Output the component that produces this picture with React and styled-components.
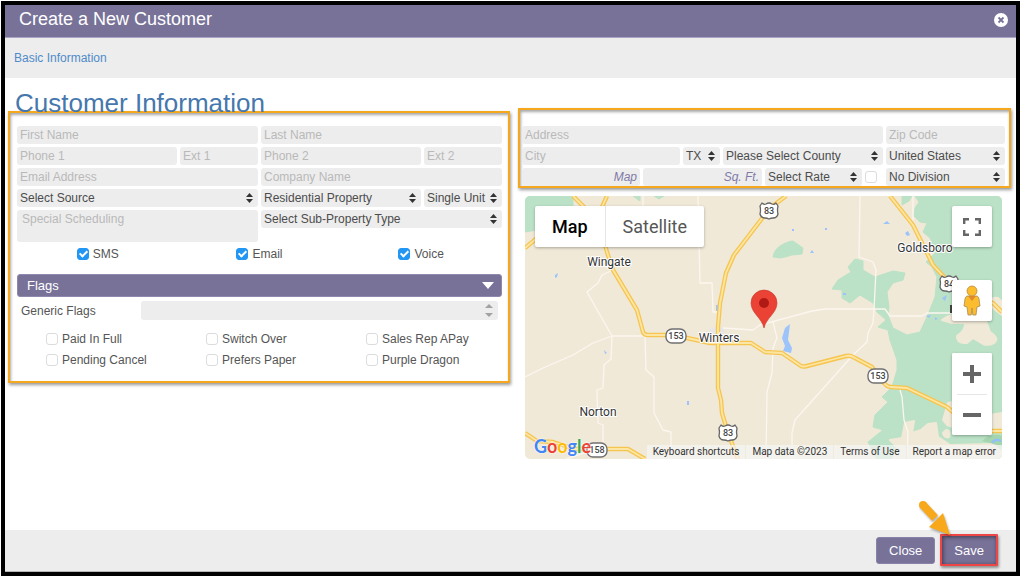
import { useState } from "react";
import styled, { createGlobalStyle } from "styled-components";

const GlobalStyle = createGlobalStyle`
  *, *::before, *::after {
    box-sizing: border-box;
  }

  body {
    margin: 0;
    background: #fff;
    color: #555;
    font-family: "Liberation Sans", Arial, sans-serif;
    font-size: 12px;
  }

  input, select, textarea, button {
    font: inherit;
    color: inherit;
    margin: 0;
  }
`;

const Page = styled.div`
  min-height: 100vh;
  padding: 1px 2px 1px 1px;
  display: flex;
`;

const Dialog = styled.div`
  flex: 1;
  display: flex;
  flex-direction: column;
  border: 4px solid #000;
  background: #fff;
`;

const TitleBar = styled.header`
  display: flex;
  align-items: center;
  justify-content: space-between;
  height: 33px;
  padding: 0 8px 3px 14px;
  background: #787299;
  border-bottom: 1px solid #aaa5c4;
  color: #fff;
`;

const Title = styled.h2`
  margin: 0;
  font-size: 18px;
  font-weight: 400;
`;

const CloseIcon = styled.button`
  display: flex;
  padding: 0;
  border: 0;
  background: none;
`;

const Tabs = styled.nav`
  display: flex;
  align-items: center;
  height: 40px;
  padding: 0 9px;
  background: #ededed;
`;

const TabLink = styled.a`
  color: #4f8bca;
  text-decoration: none;
`;

const Content = styled.main`
  flex: 1;
  display: grid;
  grid-template-columns: 502fr 493fr;
  gap: 8px;
  align-items: start;
  padding: 0 5px 0 3px;
`;

const Heading = styled.h1`
  margin: 0;
  padding: 10px 7px 0;
  height: 33px;
  line-height: 30px;
  font-size: 26px;
  font-weight: 400;
  color: #4677ad;
`;

const Panel = styled.section`
  border: 2px solid #f5a71d;
  box-shadow: 1px 2px 3px rgba(0, 0, 0, 0.4), inset 1px 2px 3px rgba(0, 0, 0, 0.35);
`;

const CustomerPanel = styled(Panel)`
  padding: 13px 6px 12px 7px;
`;

const AddressPanel = styled(Panel)`
  margin-top: 30px;
  padding: 16px 4px 0 2px;
`;

const Stack = styled.div`
  display: flex;
  flex-direction: column;
  gap: 3px;
`;

const Row = styled.div`
  display: grid;
  grid-template-columns: ${(props) => props.$columns};
  gap: 3px;
  align-items: start;
`;

const Field = styled.input`
  display: block;
  width: 100%;
  min-width: 0;
  height: 18px;
  padding: 0 3px;
  border: 0;
  border-radius: 3px;
  background: #ededed;

  &::placeholder {
    color: #b9b9b9;
    opacity: 1;
  }
`;

const UnitField = styled(Field)`
  text-align: right;

  &::placeholder {
    color: #817aa8;
    font-style: italic;
  }
`;

const Notes = styled.textarea`
  display: block;
  width: 100%;
  height: 32px;
  padding: 2px 5px;
  border: 0;
  border-radius: 3px;
  background: #ededed;
  resize: none;

  &::placeholder {
    color: #b9b9b9;
    opacity: 1;
  }
`;

const SelectWrap = styled.div`
  position: relative;
  min-width: 0;

  svg {
    position: absolute;
    right: 5px;
    top: 4px;
    pointer-events: none;
  }
`;

const SelectBox = styled.select`
  appearance: none;
  display: block;
  width: 100%;
  height: 18px;
  padding: 0 3px;
  border: 0;
  border-radius: 3px;
  background: #ededed;
  color: #4c4c4c;
`;

const Checkbox = styled.input`
  appearance: none;
  position: relative;
  flex: none;
  width: 12px;
  height: 12px;
  border: 1px solid #dcdcdc;
  border-radius: 3px;
  background: #fff;

  &:checked {
    border-color: #2196f3;
    background: #2196f3;
  }

  &:checked::after {
    content: "";
    position: absolute;
    left: 3px;
    top: 0;
    width: 5px;
    height: 8px;
    border: solid #fff;
    border-width: 0 2px 2px 0;
    transform: rotate(45deg);
  }
`;

const CheckLabel = styled.label`
  display: flex;
  align-items: center;
  gap: 4px;
  height: 18px;
`;

const ContactMethods = styled.div`
  display: grid;
  grid-template-columns: repeat(3, 1fr);
  justify-items: center;
  padding: 3px 0 11px;
`;

const FlagsBar = styled.button`
  display: flex;
  align-items: center;
  justify-content: space-between;
  width: 100%;
  height: 23px;
  padding: 0 7px 0 9px;
  border: 1px solid #8f89b0;
  border-radius: 3px;
  background: #787299;
  color: #fff;
  font-size: 13px;
`;

const GenericFlags = styled.div`
  display: grid;
  grid-template-columns: 120px 1fr;
  align-items: center;
  padding: 4px 4px 10px;
`;

const FlagList = styled.div`
  position: relative;
  height: 19px;

  svg {
    position: absolute;
    right: 4px;
    top: 3px;
    pointer-events: none;
  }
`;

const FlagSelect = styled.select`
  appearance: none;
  display: block;
  width: 100%;
  height: 19px;
  padding: 0;
  border: 0;
  border-radius: 3px;
  background: #ededed;
  overflow: hidden;
`;

const FlagGrid = styled.div`
  display: grid;
  grid-template-columns: 160fr 160fr 136fr;
  row-gap: 3px;
  padding: 0 0 0 29px;
`;

const MapBox = styled.div`
  position: relative;
  height: 263px;
  margin: 8px 9px 0 7px;
  border-radius: 5px;
  overflow: hidden;
  font-family: Roboto, "Liberation Sans", sans-serif;
`;

const MapDrawing = styled.svg`
  display: block;
  width: 100%;
  height: 100%;
`;

const MapTypes = styled.div`
  position: absolute;
  left: 10px;
  top: 10px;
  display: flex;
  background: #fff;
  border-radius: 2px;
  box-shadow: 0 1px 3px rgba(0, 0, 0, 0.3);
`;

const MapType = styled.button`
  height: 41px;
  padding: 0 17px;
  border: 0;
  background: none;
  color: ${(props) => (props.$active ? "#000" : "#565656")};
  font-size: 18px;
  font-weight: ${(props) => (props.$active ? 500 : 400)};

  & + & {
    border-left: 1px solid #e6e6e6;
  }
`;

const MapControls = styled.div`
  position: absolute;
  right: 10px;
  top: 10px;
  bottom: 24px;
  display: flex;
  flex-direction: column;
`;

const MapButton = styled.button`
  display: flex;
  align-items: center;
  justify-content: center;
  width: 40px;
  height: 41px;
  padding: 0;
  border: 0;
  border-radius: 2px;
  background: #fff;
  box-shadow: 0 1px 3px rgba(0, 0, 0, 0.3);
`;

const Pegman = styled(MapButton)`
  margin: auto 0 32px;
`;

const ZoomGroup = styled.div`
  border-radius: 2px;
  background: #fff;
  box-shadow: 0 1px 3px rgba(0, 0, 0, 0.3);

  ${MapButton} {
    box-shadow: none;
  }
`;

const Logo = styled.a`
  position: absolute;
  left: 9px;
  bottom: 3px;
  font-family: Lato, sans-serif;
  font-size: 18px;
  font-weight: 700;
  line-height: 20px;
  text-decoration: none;
  text-shadow: 0 0 1px #fff, 0 0 2px #fff;
`;

const LogoLetter = styled.span`
  color: ${(props) => props.$color};
`;

const Attribution = styled.div`
  position: absolute;
  right: 0;
  bottom: 0;
  display: flex;
  height: 14px;
  background: rgba(245, 245, 245, 0.7);
  color: #333;
  font-size: 10px;
  line-height: 14px;

  a, span {
    padding: 0 6px;
    color: inherit;
    text-decoration: none;
  }

  * + * {
    border-left: 1px solid rgba(240, 233, 216, 0.8);
  }
`;

const Footer = styled.footer`
  position: relative;
  display: flex;
  justify-content: flex-end;
  align-items: flex-start;
  gap: 5px;
  height: 42px;
  padding: 4px 18px 0;
  background: #ededed;
  border-bottom: 1px solid #b5b5b5;
`;

const ActionButton = styled.button`
  height: 27px;
  margin-top: 3px;
  padding: 0 12px;
  border: 1px solid #8882a8;
  border-radius: 3px;
  background: #787299;
  color: #fff;
  font-size: 13px;
`;

const SaveButton = styled(ActionButton)`
  height: 32px;
  margin-top: 0;
  border: 2px solid #ee4547;
  border-radius: 1px;
  box-shadow: 1px 2px 3px rgba(0, 0, 0, 0.4), inset 1px 1px 4px rgba(0, 0, 0, 0.5);
`;

const Pointer = styled.svg`
  position: absolute;
  right: 65px;
  top: -32px;
  filter: drop-shadow(1px 2px 1px rgba(0, 0, 0, 0.3));
`;

function SortArrows({ color = "#333" }) {
  return (
    <svg width="7" height="10" viewBox="0 0 7 10" fill={color}>
      <path d="M3.500 0 7 4H0zM3.500 10 0 6h7z" />
    </svg>
  );
}

function Select({ label, options }) {
  return (
    <SelectWrap>
      <SelectBox aria-label={label}>
        {options.map((option) => (
          <option key={option}>{option}</option>
        ))}
      </SelectBox>
      <SortArrows />
    </SelectWrap>
  );
}

function Input({ label, type = "text" }) {
  return <Field type={type} placeholder={label} aria-label={label} />;
}

function Check({ label, checked = false }) {
  const [value, setValue] = useState(checked);

  return (
    <CheckLabel>
      <Checkbox
        type="checkbox"
        checked={value}
        onChange={(e) => setValue(e.target.checked)}
      />
      {label}
    </CheckLabel>
  );
}

const highways = [
  "M573 196 584 207 600 228 607 252 613 270 637 310 643 332Q644 335 648 335H666L687 338 710 343H751L765 352 782 353 801 366Q803 367 807 366L846 356Q851 355 855 358L872 367 884 383Q887 387 891 387L907 388 947 407 960 418 980 431H1002",
  "M607 196 602 207 590 222 537 238 525 248",
  "M786 196 770 208 734 255 726 273 720 303 718 327V388L721 400 722 413 728 433 738 459",
  "M890 196 913 225 933 265 947 280 975 300 993 303 1002 312",
  "M525 433 537 441 553 442 575 449H628L645 459",
];

const minorRoads = [
  "M643 196V210M698 196 700 283H712L713 312H718",
  "M613 270 602 275 598 283 587 292 612 336H645L646 370 654 377V413L663 430 671 432V447",
  "M525 377 543 368 573 355 593 343 612 336 611 359 604 365 603 388 597 390 598 423 603 425V447L566 459",
  "M723 328 753 330 760 325 812 311 825 309H885L890 316H922L927 313H952",
  "M860 196 859 257 873 262 876 270 874 310 873 323 868 333 867 342 853 355 795 420 792 433V459",
  "M773 322 777 338 773 348 772 373 767 392 766 459",
  "M900 390 902 397 904 420 908 432 907 459",
  "M913 196V220",
];

const woods = [
  "M525 196H573V207L537 230 525 232z",
  "M633 196H640V201zM654 196H664L659 199z",
  "M773 257Q774 250 780 246 788 241 793 241L803 248 802 254 792 255Q786 257 780 258z",
  "M902 196H912L909 201 902 205z",
  "M915 196 919 202 915 208 914 216 920 222 927 223 923 232 930 238 936 252 926 262 932 267 937 277 935 297 927 317 920 332 907 335 893 328 888 315 889 307 887 292 893 283 903 280 905 273 893 271 875 277 863 270 863 261 855 259 848 267 851 272 838 280 832 289 842 290 842 298 850 303 860 295 873 303 877 312 886 320 878 327 888 330 890 340 897 360V370L892 387 882 397 888 402 875 415 873 427 883 430 868 442 877 459H1002V196z",
];

const clearings = [
  "M942 320Q952 312 965 317L985 318 990 332Q1000 338 994 343 988 346 983 344L973 338 967 343Q957 344 957 336 966 330 965 323L952 323z",
  "M990 303Q990 297 998 298L1002 302V315L994 309z",
  "M948 403 943 420 947 425 962 430 970 420 962 400z",
  "M905 423 914 421 912 433 921 430 928 424 936 423 938 437 950 445 992 444 1002 452V459H893L898 448 890 440 902 438z",
  "M984 416 1002 413V431H984z",
  "M946 430Q951 430 949 437 944 438 943 433z",
];

const ponds = [
  "M790 324 785 328 782 338 785 346 783 351 791 353 792 348 788 340 789 332z",
  "M555 275 558 273 557 277 555 278zM604 350 607 353 605 354zM687 401H689V405H687zM716 305H718V311H716z",
  "M883 224 887 221 890 224zM905 233 908 231 910 235 907 236zM810 253 812 250 814 253zM792 229H794V231H792zM825 228H827V230H825zM843 293H846V295H843z",
  "M942 298 947 295 945 301zM926 316 931 315 929 318zM935 317 938 319 935 320z",
];

function UsShield({ x, y, number }) {
  return (
    <g transform={`translate(${x} ${y})`}>
      <path
        d="M-7-8Q-5-6-3-7 0-9 3-7 5-6 7-8L9-5Q8-1 9 3 8 7 4 7 2 7 0 8-2 7-4 7-8 7-9 3-8-1-9-5z"
        fill="#fff"
        stroke="#666"
        strokeWidth="1.3"
        strokeLinejoin="round"
      />
      <text y="3" textAnchor="middle" fontSize="9" fontWeight="500" fill="#444">
        {number}
      </text>
    </g>
  );
}

function StateShield({ x, y, number }) {
  return (
    <g transform={`translate(${x} ${y})`}>
      <rect x="-10" y="-7" width="20" height="14" rx="6" fill="#fff" stroke="#707070" strokeWidth="1.4" />
      <text y="3" textAnchor="middle" fontSize="9" fontWeight="500" fill="#444">
        {number}
      </text>
    </g>
  );
}

function Town({ x, y, name }) {
  return (
    <text
      x={x}
      y={y}
      textAnchor="middle"
      fontSize="12"
      fill="#333"
      stroke="#fff"
      strokeWidth="2"
      paintOrder="stroke"
    >
      {name}
    </text>
  );
}

function CountyMap() {
  return (
    <MapDrawing viewBox="525 196 477 263" preserveAspectRatio="xMidYMid slice">
      <rect x="525" y="196" width="477" height="263" fill="#f0e9d8" />
      <g fill="#bbe2c6" stroke="#bbe2c6" strokeLinejoin="round">
        {woods.map((d) => (
          <path key={d} d={d} />
        ))}
      </g>
      <g fill="#f0e9d8" stroke="#f0e9d8" strokeWidth="2" strokeLinejoin="round">
        {clearings.map((d) => (
          <path key={d} d={d} />
        ))}
      </g>
      <path d="M982 441Q992 432 1002 436V446z" fill="#a4d5ae" />
      <path d="M992 443Q995 438 1001 441" fill="none" stroke="#90bff9" strokeWidth="2" />
      <g fill="#9cc3fa">
        {ponds.map((d) => (
          <path key={d} d={d} />
        ))}
      </g>
      <ellipse cx="717" cy="331" rx="8" ry="4" fill="#e6e6e8" />
      <g fill="none" stroke="#fcf6f0" strokeWidth="1.3" strokeLinejoin="round">
        {minorRoads.map((d) => (
          <path key={d} d={d} />
        ))}
      </g>
      <g fill="none" strokeLinejoin="round">
        {highways.map((d) => (
          <path key={d} d={d} stroke="#f6c550" strokeWidth="4.4" />
        ))}
        {highways.map((d) => (
          <path key={d} d={d} stroke="#fde6a4" strokeWidth="1.8" />
        ))}
      </g>
      <StateShield x={676} y={336} number="153" />
      <StateShield x={878} y={376} number="153" />
      <StateShield x={597} y={450} number="158" />
      <UsShield x={769} y={211} number="83" />
      <UsShield x={728} y={433} number="83" />
      <UsShield x={949} y={284} number="84" />
      <Town x={609} y={266} name="Wingate" />
      <Town x={719} y={342} name="Winters" />
      <Town x={598} y={416} name="Norton" />
      <Town x={925} y={252} name="Goldsboro" />
      <path d="M950 305h3v8h-3z" fill="#444" />
      <path
        d="M764 328C762 318 751 313 751 303a13 13 0 0 1 26 0C777 313 766 318 764 328z"
        fill="#ea4335"
        stroke="#c5362b"
        strokeWidth="0.6"
      />
      <circle cx="764" cy="303" r="5" fill="#b11a14" />
    </MapDrawing>
  );
}

const logoLetters = [
  ["G", "#4285f4"],
  ["o", "#ea4335"],
  ["o", "#fbbc05"],
  ["g", "#4285f4"],
  ["l", "#34a853"],
  ["e", "#ea4335"],
];

function MapPreview() {
  const [type, setType] = useState("Map");

  return (
    <MapBox>
      <CountyMap />
      <MapTypes>
        {["Map", "Satellite"].map((name) => (
          <MapType key={name} $active={type === name} onClick={() => setType(name)}>
            {name}
          </MapType>
        ))}
      </MapTypes>
      <MapControls>
        <MapButton aria-label="Toggle fullscreen view">
          <svg width="18" height="18" viewBox="0 0 18 18" fill="none" stroke="#666" strokeWidth="2.4">
            <path d="M1.200 6V1.200H6M12 1.200h4.800V6M16.800 12v4.800H12M6 16.800H1.200V12" />
          </svg>
        </MapButton>
        <Pegman aria-label="Street View">
          <svg width="18" height="31" viewBox="0 0 18 31">
            <path
              d="M4 11h10q2 1 2 3l1 7-3 1-1 8H9.800L9 23l-.8 7H5L4 22l-3-1 1-7q0-2 2-3z"
              fill="#fbbc2d"
              stroke="#a98a55"
              strokeWidth="0.8"
            />
            <path d="M5 11h8l-4 5z" fill="#e08a2c" />
            <circle cx="9" cy="6" r="5" fill="#fbbc2d" stroke="#b98c3c" strokeWidth="0.8" />
          </svg>
        </Pegman>
        <ZoomGroup>
          <MapButton aria-label="Zoom in">
            <svg width="18" height="18" viewBox="0 0 18 18" fill="#666">
              <path d="M7 0h4v7h7v4h-7v7H7v-7H0V7h7z" />
            </svg>
          </MapButton>
          <MapButton aria-label="Zoom out">
            <svg width="30" height="41" viewBox="0 0 30 41">
              <path d="M0 0h30v1H0z" fill="#e6e6e6" />
              <path d="M6 19h18v4H6z" fill="#666" />
            </svg>
          </MapButton>
        </ZoomGroup>
      </MapControls>
      <Logo href="#google">
        {logoLetters.map(([letter, color], i) => (
          <LogoLetter key={i} $color={color}>
            {letter}
          </LogoLetter>
        ))}
      </Logo>
      <Attribution>
        <a href="#shortcuts">Keyboard shortcuts</a>
        <span>Map data ©2023</span>
        <a href="#terms">Terms of Use</a>
        <a href="#report">Report a map error</a>
      </Attribution>
    </MapBox>
  );
}

function CustomerForm() {
  return (
    <CustomerPanel>
      <Stack>
        <Row $columns="1fr 1fr">
          <Input label="First Name" />
          <Input label="Last Name" />
        </Row>
        <Row $columns="160fr 78fr 160fr 78fr">
          <Input label="Phone 1" type="tel" />
          <Input label="Ext 1" />
          <Input label="Phone 2" type="tel" />
          <Input label="Ext 2" />
        </Row>
        <Row $columns="1fr 1fr">
          <Input label="Email Address" type="email" />
          <Input label="Company Name" />
        </Row>
        <Row $columns="241fr 160fr 78fr">
          <Select label="Source" options={["Select Source"]} />
          <Select label="Property" options={["Residential Property"]} />
          <Select label="Units" options={["Single Unit"]} />
        </Row>
        <Row $columns="1fr 1fr">
          <Notes placeholder="Special Scheduling" aria-label="Special Scheduling" />
          <Select label="Sub-Property Type" options={["Select Sub-Property Type"]} />
        </Row>
      </Stack>
      <ContactMethods>
        <Check label="SMS" checked />
        <Check label="Email" checked />
        <Check label="Voice" checked />
      </ContactMethods>
      <FlagsBar>
        Flags
        <svg width="12" height="7" viewBox="0 0 12 7" fill="#fff">
          <path d="M0 0h12L6 7z" />
        </svg>
      </FlagsBar>
      <GenericFlags>
        <label htmlFor="generic-flags">Generic Flags</label>
        <FlagList>
          <FlagSelect id="generic-flags" multiple size={1} />
          <svg width="10" height="13" viewBox="0 0 10 13" fill="#a2a2a2">
            <path d="M5 0 9 4H1zM5 13 1 9h8z" />
          </svg>
        </FlagList>
      </GenericFlags>
      <FlagGrid>
        <Check label="Paid In Full" />
        <Check label="Switch Over" />
        <Check label="Sales Rep APay" />
        <Check label="Pending Cancel" />
        <Check label="Prefers Paper" />
        <Check label="Purple Dragon" />
      </FlagGrid>
    </CustomerPanel>
  );
}

function AddressForm() {
  return (
    <AddressPanel>
      <Stack>
        <Row $columns="361fr 119fr">
          <Input label="Address" />
          <Input label="Zip Code" />
        </Row>
        <Row $columns="158fr 37fr 160fr 119fr">
          <Input label="City" />
          <Select label="State" options={["TX"]} />
          <Select label="County" options={["Please Select County"]} />
          <Select label="Country" options={["United States"]} />
        </Row>
        <Row $columns="118fr 119fr 97fr 18fr 119fr">
          <UnitField placeholder="Map" aria-label="Map" />
          <UnitField placeholder="Sq. Ft." aria-label="Square feet" />
          <Select label="Rate" options={["Select Rate"]} />
          <CheckLabel>
            <Checkbox type="checkbox" aria-label="Use division" />
          </CheckLabel>
          <Select label="Division" options={["No Division"]} />
        </Row>
      </Stack>
    </AddressPanel>
  );
}

function App() {
  return (
    <>
      <GlobalStyle />
      <Page>
        <Dialog role="dialog" aria-labelledby="dialog-title">
          <TitleBar>
            <Title id="dialog-title">Create a New Customer</Title>
            <CloseIcon aria-label="Close dialog">
              <svg width="14" height="14" viewBox="0 0 14 14">
                <circle cx="7" cy="7" r="7" fill="#fff" />
                <path d="m4.500 4.500 5 5m0-5-5 5" stroke="#787299" strokeWidth="1.800" />
              </svg>
            </CloseIcon>
          </TitleBar>
          <Tabs>
            <TabLink href="#basic">Basic Information</TabLink>
          </Tabs>
          <Content>
            <div>
              <Heading>Customer Information</Heading>
              <CustomerForm />
            </div>
            <div>
              <AddressForm />
              <MapPreview />
            </div>
          </Content>
          <Footer>
            <ActionButton>Close</ActionButton>
            <SaveButton>Save</SaveButton>
            <Pointer width="36" height="38" viewBox="0 0 36 38" fill="#f8a81b">
              <path d="M8 7 20 20" stroke="#f8a81b" strokeWidth="8" />
              <circle cx="8" cy="7" r="4" />
              <path d="M28 15 35 37 14 29z" />
            </Pointer>
          </Footer>
        </Dialog>
      </Page>
    </>
  );
}

export default App;
